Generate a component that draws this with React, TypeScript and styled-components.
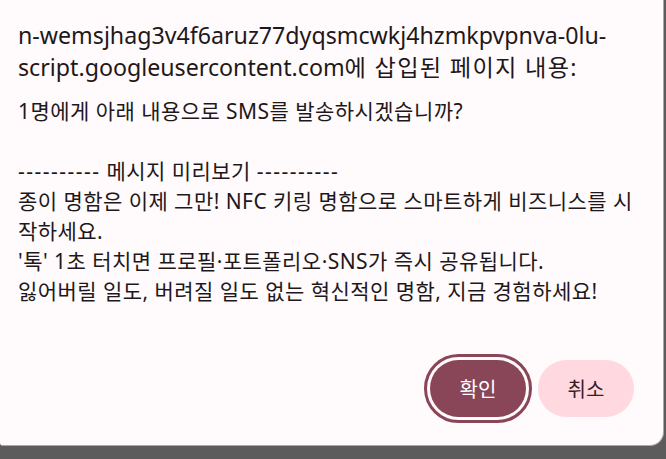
import styled, { createGlobalStyle } from 'styled-components';

const GlobalStyle = createGlobalStyle`
  html, body {
    margin: 0;
    padding: 0;
    background: #5c5c5c;
  }
  body {
    width: 666px;
    height: 459px;
    overflow: hidden;
  }
`;

// the confirm box itself
const Dialog = styled.div`
  box-sizing: border-box;
  width: 664px;
  height: 446px;
  background: #fffafb;
  border-right: 1px solid #a8a8a8;
  border-bottom: 1px solid #a8a8a8;
  border-radius: 0 0 14px 3px;
  padding: 19px 29px 28px 18px;
  display: flex;
  flex-direction: column;
  font-family: 'Noto Sans', 'Noto Sans CJK KR', sans-serif;
  color: #1e181a;
`;

const Title = styled.h1`
  margin: 0;
  font-size: 23.2px;
  font-weight: 400;
  line-height: 32px;
`;

// korean part of the origin line runs a bit wider in the original font
const Ko = styled.span`
  letter-spacing: 1.3px;
`;

const Message = styled.div`
  margin-top: 13px;
  font-size: 21px;
  line-height: 30px;
  letter-spacing: 0.45px;
  flex: 1;
`;

// the dashed rule around "메시지 미리보기"
const Dashes = styled.span`
  letter-spacing: 1.5px;
`;

const Line = styled.div`
  white-space: nowrap;
`;

const Actions = styled.div`
  display: flex;
  justify-content: flex-end;
  gap: 12px;
`;

const Button = styled.button<{ $primary?: boolean }>`
  width: 96px;
  height: 57px;
  border: none;
  border-radius: 29px;
  font-family: 'Noto Sans CJK KR', sans-serif;
  font-size: 20px;
  cursor: pointer;
  background: ${(p) => (p.$primary ? '#8a4659' : '#ffd9df')};
  color: ${(p) => (p.$primary ? '#ffffff' : '#3a1c26')};
  outline: ${(p) => (p.$primary ? '3px solid #8a4659' : 'none')};
  outline-offset: 3px;
`;

const lines = [
  '1명에게 아래 내용으로 SMS를 발송하시겠습니까?',
  '\u00a0',
  null,
  '종이 명함은 이제 그만! NFC 키링 명함으로 스마트하게 비즈니스를 시',
  '작하세요.',
  "'톡' 1초 터치면 프로필·포트폴리오·SNS가 즉시 공유됩니다.",
  '잃어버릴 일도, 버려질 일도 없는 혁신적인 명함, 지금 경험하세요!',
];

export default function App() {
  return (
    <>
      <GlobalStyle />
      <Dialog>
        <Title>
          <Line>n-wemsjhag3v4f6aruz77dyqsmcwkj4hzmkpvpnva-0lu-</Line>
          <Line>
            script.googleusercontent.com<Ko>에 삽입된 페이지 내용:</Ko>
          </Line>
        </Title>
        <Message>
          {lines.map((l, i) =>
            l === null ? (
              <Line key={i}>
                <Dashes>----------</Dashes> 메시지 미리보기 <Dashes>----------</Dashes>
              </Line>
            ) : (
              <Line key={i}>{l}</Line>
            )
          )}
        </Message>
        <Actions>
          <Button $primary>확인</Button>
          <Button>취소</Button>
        </Actions>
      </Dialog>
    </>
  );
}
